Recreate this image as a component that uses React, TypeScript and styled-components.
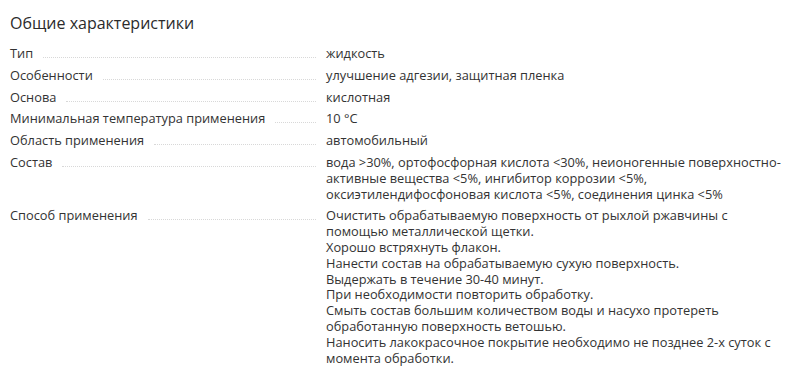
import { Fragment } from "react";
import styled, { createGlobalStyle } from "styled-components";

const GlobalStyle = createGlobalStyle`
  html, body {
    margin: 0;
    padding: 0;
    background: #fff;
  }
  body {
    font-family: "Open Sans", "Noto Sans", sans-serif;
    color: #333;
  }
`;

const Wrapper = styled.section`
  width: 800px;
  height: 372px;
  padding: 12px 10px 0;
  box-sizing: border-box;
  overflow: hidden;
`;

const Title = styled.h2`
  margin: 0 0 12px;
  font-size: 16px;
  font-weight: 400;
  line-height: 22px;
  color: #2b2b2b;
`;

const List = styled.dl`
  margin: 0;
  display: grid;
  grid-template-columns: 306px 462px;
  column-gap: 10px;
  row-gap: 6px;
  font-size: 12.8px;
  line-height: 15.8px;
`;

const Label = styled.dt`
  display: flex;
  align-items: baseline;
  margin: 0;
  color: #333;
`;

const Leader = styled.span`
  flex: 1;
  margin-left: 10px;
  border-bottom: 1px dotted #d8d8d8;
`;

const Value = styled.dd`
  margin: 0;
  color: #333;
`;

const Line = styled.span`
  display: block;
`;

const rows: { label: string; value: string[] }[] = [
  { label: "Тип", value: ["жидкость"] },
  { label: "Особенности", value: ["улучшение адгезии, защитная пленка"] },
  { label: "Основа", value: ["кислотная"] },
  { label: "Минимальная температура применения", value: ["10 °C"] },
  { label: "Область применения", value: ["автомобильный"] },
  {
    label: "Состав",
    value: [
      "вода >30%, ортофосфорная кислота <30%, неионогенные поверхностно-активные вещества <5%, ингибитор коррозии <5%, оксиэтилендифосфоновая кислота <5%, соединения цинка <5%",
    ],
  },
  {
    label: "Способ применения",
    value: [
      "Очистить обрабатываемую поверхность от рыхлой ржавчины с помощью металлической щетки.",
      "Хорошо встряхнуть флакон.",
      "Нанести состав на обрабатываемую сухую поверхность.",
      "Выдержать в течение 30-40 минут.",
      "При необходимости повторить обработку.",
      "Смыть состав большим количеством воды и насухо протереть обработанную поверхность ветошью.",
      "Наносить лакокрасочное покрытие необходимо не позднее 2-х суток с момента обработки.",
    ],
  },
];

export default function App() {
  return (
    <Wrapper>
      <GlobalStyle />
      <Title>Общие характеристики</Title>
      <List>
        {rows.map((row) => (
          <Fragment key={row.label}>
            <Label>
              {row.label}
              <Leader />
            </Label>
            <Value>
              {row.value.map((line) => (
                <Line key={line}>{line}</Line>
              ))}
            </Value>
          </Fragment>
        ))}
      </List>
    </Wrapper>
  );
}
